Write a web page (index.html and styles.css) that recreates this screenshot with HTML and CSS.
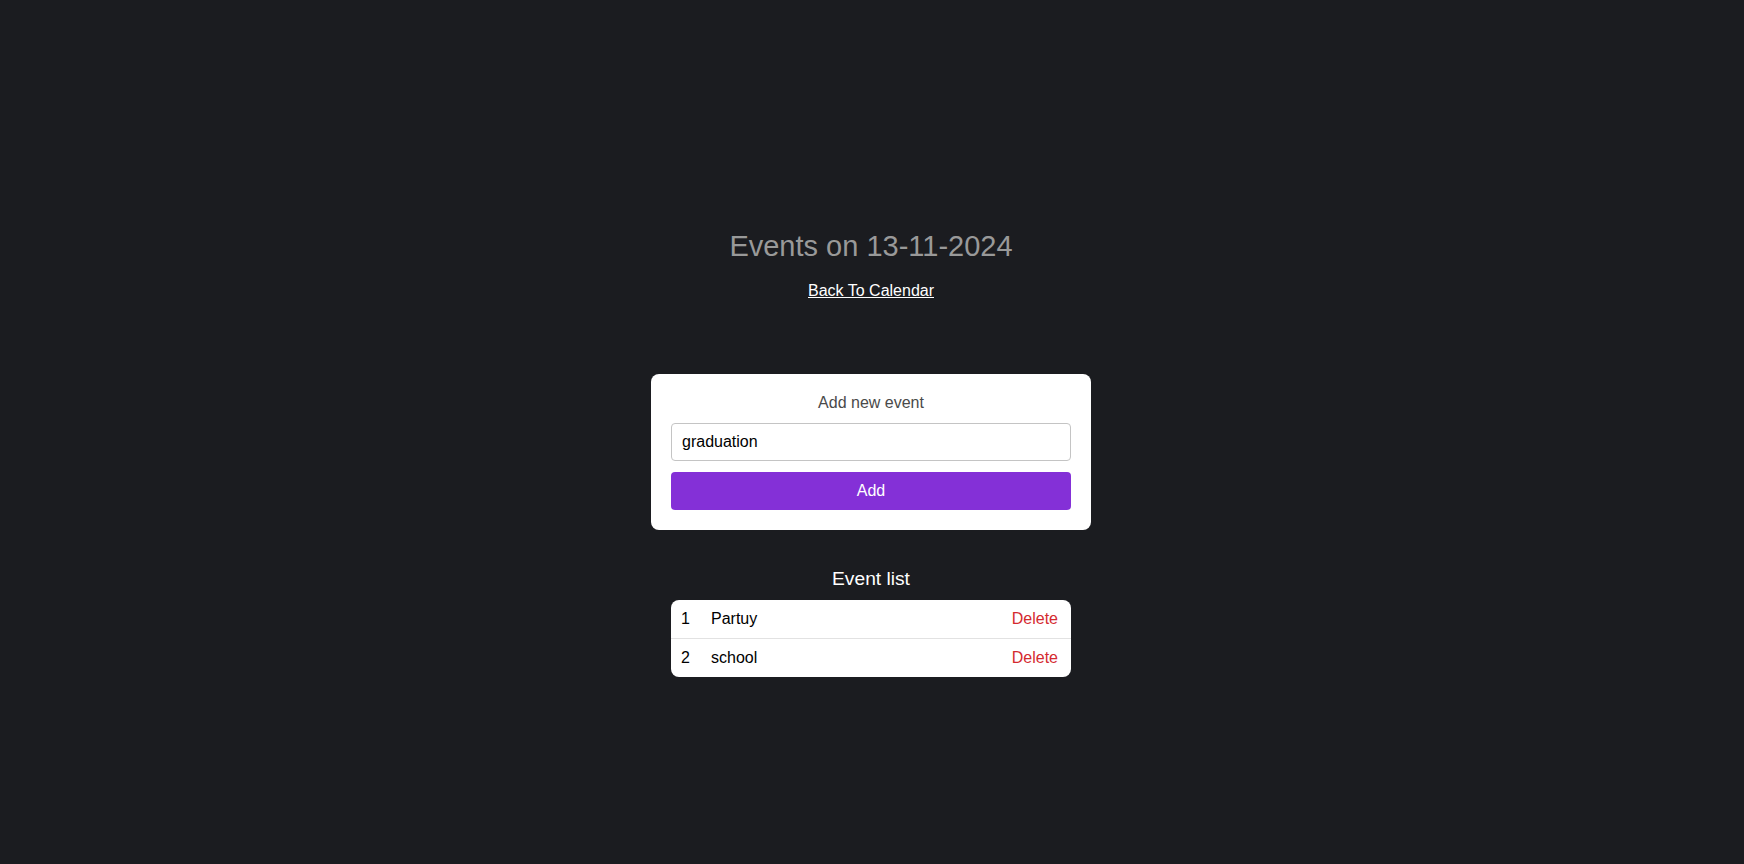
FILE: index.html
```html
<!DOCTYPE html>
<html lang="en">
<head>
<meta charset="utf-8">
<title>Events</title>
<link rel="stylesheet" href="styles.css">
</head>
<body>
<main class="page">
  <h1 class="title">Events on 13-11-2024</h1>
  <a class="back" href="#">Back To Calendar</a>

  <form class="card">
    <div class="card-label">Add new event</div>
    <input class="field" type="text" value="graduation">
    <button class="btn" type="button">Add</button>
  </form>

  <h2 class="list-title">Event list</h2>
  <ul class="list">
    <li class="row"><span class="num">1</span><span class="name">Partuy</span><span class="del">Delete</span></li>
    <li class="row"><span class="num">2</span><span class="name">school</span><span class="del">Delete</span></li>
  </ul>
</main>
</body>
</html>
```

FILE: styles.css
```css
html, body {
  margin: 0;
  padding: 0;
  background: #1b1c20;
  height: 100%;
}
body {
  font-family: "Liberation Sans", Arial, sans-serif;
  color: #fff;
}
.page {
  display: flex;
  flex-direction: column;
  align-items: center;
  padding-top: 229px;
  padding-right: 2px;
}
.title {
  margin: 0;
  font-size: 29px;
  line-height: 34px;
  font-weight: normal;
  color: #999999;
}
.back {
  margin-top: 19px;
  font-size: 16px;
  line-height: 18px;
  color: #ffffff;
  text-decoration: underline;
}
.card {
  margin: 74px 0 0;
  width: 400px;
  padding: 20px;
  background: #ffffff;
  border-radius: 8px;
  display: flex;
  flex-direction: column;
}
.card-label {
  text-align: center;
  font-size: 16px;
  line-height: 18px;
  color: #4a4a4a;
  margin-bottom: 11px;
}
.field {
  box-sizing: border-box;
  width: 100%;
  height: 38px;
  border: 1px solid #c4c4c4;
  border-radius: 4px;
  padding: 0 10px;
  font-family: "Liberation Sans", Arial, sans-serif;
  font-size: 16px;
  color: #000;
  outline: none;
  margin: 0;
}
.btn {
  margin-top: 11px;
  height: 38px;
  width: 100%;
  border: none;
  border-radius: 4px;
  background: #8430d7;
  color: #ffffff;
  font-family: "Liberation Sans", Arial, sans-serif;
  font-size: 16px;
  padding: 0;
}
.list-title {
  margin: 38px 0 0;
  font-size: 19.2px;
  line-height: 22px;
  font-weight: normal;
  color: #ffffff;
}
.list {
  list-style: none;
  margin: 10px 0 0;
  padding: 0;
  width: 400px;
  background: #fff;
  border-radius: 8px;
  overflow: hidden;
}
.row {
  display: flex;
  align-items: center;
  height: 38px;
  padding: 0 13px 0 10px;
  font-size: 16px;
  color: #000;
}
.row + .row {
  border-top: 1px solid #e2e2e2;
}
.num {
  width: 30px;
}
.name {
  flex: 1;
}
.del {
  color: #d42a2f;
}
```
